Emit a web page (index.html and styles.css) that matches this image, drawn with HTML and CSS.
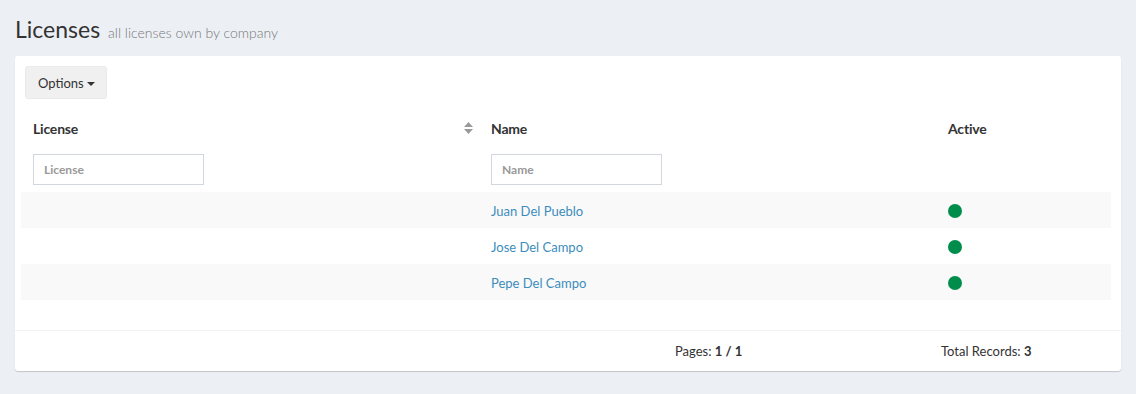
FILE: index.html
```html
<!DOCTYPE html>
<html>
<head>
<meta charset="utf-8">
<link rel="stylesheet" href="styles.css">
</head>
<body>
<section class="content-header">
  <h1>Licenses <small>all licenses own by company</small></h1>
</section>
<section class="content">
  <div class="box">
    <div class="box-body">
      <div class="toolbar">
        <button class="btn">Options <span class="caret"></span></button>
      </div>
      <table class="grid">
        <thead>
          <tr class="head">
            <th class="c1"><div class="th-inner"><span>License</span>
              <svg class="sort" width="9" height="12" viewBox="0 0 9 12"><path d="M4.5 0 L9 5 L0 5 Z" fill="#9a9a9a"/><path d="M0 7 L9 7 L4.5 12 Z" fill="#9a9a9a"/></svg></div></th>
            <th class="c2">Name</th>
            <th class="c3">Active</th>
          </tr>
          <tr class="filters">
            <td><input class="filter" placeholder="License"></td>
            <td><input class="filter" placeholder="Name"></td>
            <td></td>
          </tr>
        </thead>
        <tbody>
          <tr class="odd"><td></td><td><a href="#">Juan Del Pueblo</a></td><td><span class="dot"></span></td></tr>
          <tr><td></td><td><a href="#">Jose Del Campo</a></td><td><span class="dot"></span></td></tr>
          <tr class="odd"><td></td><td><a href="#">Pepe Del Campo</a></td><td><span class="dot"></span></td></tr>
        </tbody>
      </table>
    </div>
    <div class="box-footer">
      <div class="pages">Pages: <b>1 / 1</b></div>
      <div class="total">Total Records: <b>3</b></div>
    </div>
  </div>
</section>
</body>
</html>
```

FILE: styles.css
```css
* { box-sizing: border-box; }
html, body { margin: 0; padding: 0; }
body {
  background: #ecf0f5;
  font-family: "Source Sans Pro", "Lato", "Open Sans", sans-serif;
  font-size: 14px;
  color: #333;
  width: 1136px;
  height: 394px;
  overflow: hidden;
}
.content-header { padding: 15px 15px 0 15px; height: 56px; }
.content-header h1 {
  margin: 0;
  font-size: 23px;
  font-weight: 400;
  line-height: 28px;
  color: #333;
}
.content-header small {
  font-size: 14px;
  color: #777;
  font-weight: 300;
  padding-left: 2px;
}
.content { padding: 0 15px; }
.box {
  background: #fff;
  border-radius: 3px;
  box-shadow: 0 1px 1px rgba(0,0,0,0.18);
  height: 315px;
}
.box-body { padding: 10px 10px 0 6px; height: 275px; border-bottom: 1px solid #f2f2f2; }
.toolbar { padding-left: 4px; height: 44px; }
.btn {
  background: #f0f0f0;
  border: 1px solid #eaeaea;
  border-radius: 3px;
  height: 33px;
  padding: 0 11px 0 12px;
  font-family: inherit;
  font-size: 13px;
  color: #333;
}
.caret {
  display: inline-block;
  width: 0; height: 0;
  border-top: 4px solid #333;
  border-left: 4px solid transparent;
  border-right: 4px solid transparent;
  vertical-align: middle;
  margin-left: 0;
}
.grid { border-collapse: collapse; width: 1090px; table-layout: fixed; }
.grid th, .grid td { padding: 0 8px 0 12px; text-align: left; vertical-align: middle; }
.c1 { width: 458px; }
.c2 { width: 457px; }
.c3 { width: 175px; }
.head th { height: 36px; font-weight: 700; font-size: 14px; color: #333; letter-spacing: -0.2px; }
.th-inner { display: flex; justify-content: space-between; align-items: center; }
.sort { margin-right: -2px; }
.filters td { height: 46px; }
.filter {
  width: 171px;
  height: 31px;
  border: 1px solid #d2d6de;
  padding: 0 10px;
  font-family: inherit;
  font-size: 12px;
  font-weight: 700;
  outline: none;
}
.filter::placeholder { color: #999; }
tbody td { height: 36px; }
tr.odd td { background: #f9f9f9; }
a { color: #3c8dbc; text-decoration: none; font-size: 13px; }
.dot {
  display: inline-block;
  width: 14px; height: 14px;
  border-radius: 50%;
  background: #008d4c;
  vertical-align: middle;
  margin-top: -2px;
}
.box-footer {
  display: grid;
  grid-template-columns: 660px 266px auto;
  height: 40px;
  align-items: center;
  font-size: 13px;
}
.pages { grid-column: 2; }
.total { grid-column: 3; }
```
